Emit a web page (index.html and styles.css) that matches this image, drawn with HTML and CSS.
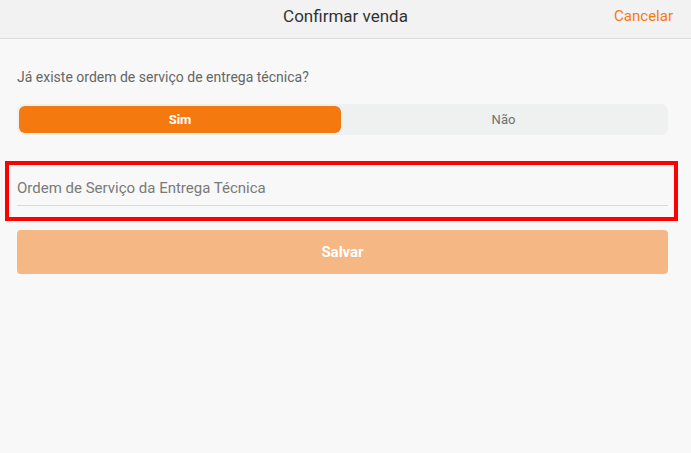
FILE: index.html
```html
<!DOCTYPE html>
<html lang="pt-BR">
<head>
<meta charset="utf-8">
<title>Confirmar venda</title>
<link rel="stylesheet" href="styles.css">
</head>
<body>
<header class="topbar">
  <div class="topbar-title">Confirmar venda</div>
  <a class="topbar-cancel" href="#">Cancelar</a>
</header>
<main class="content">
  <p class="question">Já existe ordem de serviço de entrega técnica?</p>
  <div class="segmented">
    <button class="segment segment-active" type="button">Sim</button>
    <button class="segment" type="button">Não</button>
  </div>
  <div class="field">
    <input class="field-input" type="text" placeholder="Ordem de Serviço da Entrega Técnica">
    <span class="highlight"></span>
  </div>
  <button class="save" type="button">Salvar</button>
</main>
</body>
</html>
```
FILE: styles.css
```css
* { box-sizing: border-box; }
html, body {
  margin: 0;
  padding: 0;
  height: 100%;
}
body {
  background: #f8f8f8;
  font-family: Roboto, "Liberation Sans", sans-serif;
  color: #333;
}
.topbar {
  position: relative;
  height: 39px;
  background: #f2f2f2;
  border-bottom: 1px solid #dcdcdc;
  display: flex;
  align-items: center;
  justify-content: center;
}
.topbar-title {
  font-size: 17px;
  color: #333;
  line-height: 20px;
  margin-top: -6px;
}
.topbar-cancel {
  position: absolute;
  right: 18px;
  top: 6px;
  font-size: 15px;
  line-height: 20px;
  color: #f47a12;
  text-decoration: none;
}
.content {
  padding: 29px 23px 0 17px;
}
.question {
  margin: 0;
  font-size: 14px;
  line-height: 18px;
  color: #666;
}
.segmented {
  margin-top: 18px;
  height: 31px;
  padding: 2px;
  background: #eff0f0;
  border-radius: 7px;
  display: flex;
}
.segment {
  flex: 1;
  border: 0;
  background: transparent;
  font-family: inherit;
  font-size: 13px;
  color: #707070;
  border-radius: 6px;
  padding: 0;
  cursor: pointer;
}
.segment-active {
  flex: 0 0 322px;
  background: #f47a0f;
  color: #fff;
  font-weight: 700;
}
.field {
  position: relative;
  margin-top: 26px;
  padding: 18px 0 8px;
  border-bottom: 1px solid #d9d9d9;
}
.field-input {
  display: block;
  width: 100%;
  height: 18px;
  border: 0;
  outline: 0;
  background: transparent;
  padding: 0;
  font-family: inherit;
  font-size: 15px;
  color: #333;
}
.field-input::placeholder {
  color: #7a7a7a;
}
.highlight {
  position: absolute;
  left: -12px;
  right: -10px;
  top: 0;
  bottom: -16px;
  border: 4px solid #ff0000;
  pointer-events: none;
}
.save {
  display: block;
  width: 100%;
  margin-top: 24px;
  height: 44px;
  border: 0;
  border-radius: 4px;
  background: #f5b783;
  color: #fff;
  font-family: inherit;
  font-size: 15px;
  font-weight: 700;
  cursor: pointer;
}
```
